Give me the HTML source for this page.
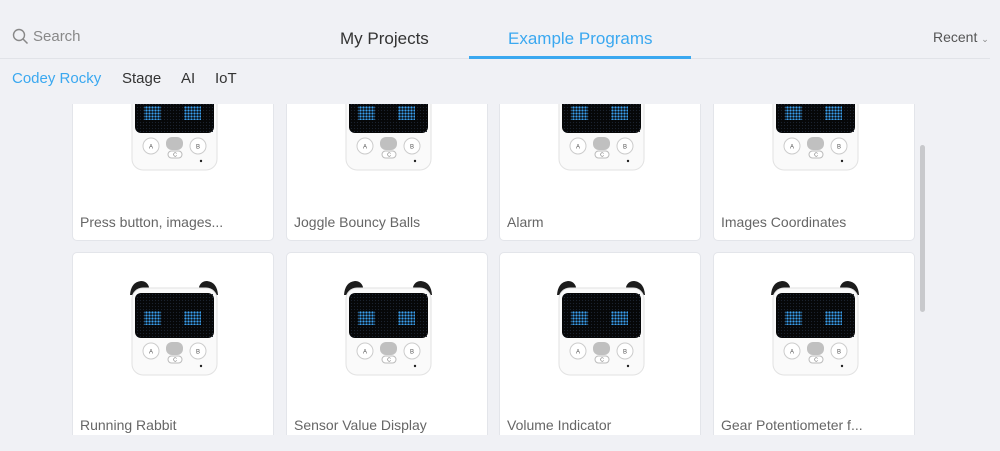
<!DOCTYPE html><html><head><style>
body{margin:0;width:1000px;height:451px;background:#f0f1f5;font-family:"Liberation Sans",sans-serif;overflow:hidden;position:relative}
.a{position:absolute}
.card{position:absolute;width:202px;background:#fff;border:1px solid #e3e5ea;border-radius:5px;box-sizing:border-box;overflow:hidden}
.card svg{position:absolute;left:0;top:-2px}
.t{position:absolute;left:7px;font-size:14px;color:#666;white-space:nowrap}
</style></head><body>
<svg width="0" height="0" class="a"><defs>
<pattern id="d" width="3" height="3" patternUnits="userSpaceOnUse"><circle cx="1.5" cy="1.5" r="1.15" fill="#3aa0f0"/></pattern>
<pattern id="g" width="3" height="3" patternUnits="userSpaceOnUse"><circle cx="1.5" cy="1.5" r="0.6" fill="#1b2330"/></pattern>
<g id="r">
<path d="M57 44 Q58 31 68 30 Q74 30 76 36 L73 44Z" fill="#1c1c1c"/>
<path d="M145 44 Q144 31 134 30 Q128 30 126 36 L129 44Z" fill="#1c1c1c"/>
<rect x="59" y="37" width="85" height="87" rx="11" fill="#fafafa" stroke="#e2e2e2"/>
<rect x="62" y="42" width="79" height="45" rx="6" fill="#060708"/>
<rect x="63" y="43" width="77" height="43" fill="url(#g)"/>
<path d="M71 60h17v14h-17z" fill="url(#d)"/>
<path d="M111 60h17v14h-17z" fill="url(#d)"/>
<circle cx="78" cy="100" r="8" fill="#fff" stroke="#ccc"/><text x="78" y="102.5" font-size="6" text-anchor="middle" fill="#555">A</text>
<circle cx="125" cy="100" r="8" fill="#fff" stroke="#ccc"/><text x="125" y="102.5" font-size="6" text-anchor="middle" fill="#555">B</text>
<rect x="93" y="91" width="17" height="13" rx="6" fill="#999" opacity=".6"/>
<rect x="95" y="105" width="14" height="7" rx="3.5" fill="#fff" stroke="#bbb"/><text x="102" y="110.5" font-size="5" text-anchor="middle" fill="#555">C</text>
<circle cx="128" cy="115" r="1.2" fill="#222"/>
</g></defs></svg>

<div class="card" style="left:72px;top:47px;height:194px"><svg width="202" height="194"><use href="#r"/></svg><div class="t" style="top:166px">Press button, images...</div></div>
<div class="card" style="left:286px;top:47px;height:194px"><svg width="202" height="194"><use href="#r"/></svg><div class="t" style="top:166px">Joggle Bouncy Balls</div></div>
<div class="card" style="left:499px;top:47px;height:194px"><svg width="202" height="194"><use href="#r"/></svg><div class="t" style="top:166px">Alarm</div></div>
<div class="card" style="left:713px;top:47px;height:194px"><svg width="202" height="194"><use href="#r"/></svg><div class="t" style="top:166px">Images Coordinates</div></div>

<div class="card" style="left:72px;top:252px;height:194px"><svg width="202" height="194"><use href="#r"/></svg><div class="t" style="top:164px">Running Rabbit</div></div>
<div class="card" style="left:286px;top:252px;height:194px"><svg width="202" height="194"><use href="#r"/></svg><div class="t" style="top:164px">Sensor Value Display</div></div>
<div class="card" style="left:499px;top:252px;height:194px"><svg width="202" height="194"><use href="#r"/></svg><div class="t" style="top:164px">Volume Indicator</div></div>
<div class="card" style="left:713px;top:252px;height:194px"><svg width="202" height="194"><use href="#r"/></svg><div class="t" style="top:164px">Gear Potentiometer f...</div></div>

<div class="a" style="left:0;top:435px;width:1000px;height:16px;background:#f0f1f5"></div>
<div class="a" style="left:920px;top:145px;width:5px;height:167px;background:#c8c9cc;border-radius:3px"></div>

<div class="a" style="left:0;top:0;width:1000px;height:104px;background:#f0f1f5"></div>
<div class="a" style="left:0;top:58px;width:990px;height:1px;background:#e1e3e8"></div>
<svg class="a" style="left:12px;top:28px" width="18" height="18"><circle cx="7" cy="7" r="5.5" fill="none" stroke="#888" stroke-width="1.4"/><path d="M11 11l4.5 4.5" stroke="#888" stroke-width="1.5"/></svg>
<div class="a" style="left:33px;top:28px;font-size:15px;color:#888">Search</div>
<div class="a" style="left:340px;top:29px;font-size:17px;color:#333">My Projects</div>
<div class="a" style="left:508px;top:29px;font-size:17px;color:#3aa8f0">Example Programs</div>
<div class="a" style="left:469px;top:56px;width:222px;height:3px;background:#3aa8f0"></div>
<div class="a" style="left:933px;top:29px;font-size:14px;color:#555">Recent <span style="font-size:9px;color:#888">⌄</span></div>
<div class="a" style="left:12px;top:70px;font-size:15px;color:#3aa8f0">Codey Rocky</div>
<div class="a" style="left:122px;top:70px;font-size:15px;color:#333">Stage</div>
<div class="a" style="left:181px;top:70px;font-size:15px;color:#333">AI</div>
<div class="a" style="left:215px;top:70px;font-size:15px;color:#333">IoT</div>
</body></html>
